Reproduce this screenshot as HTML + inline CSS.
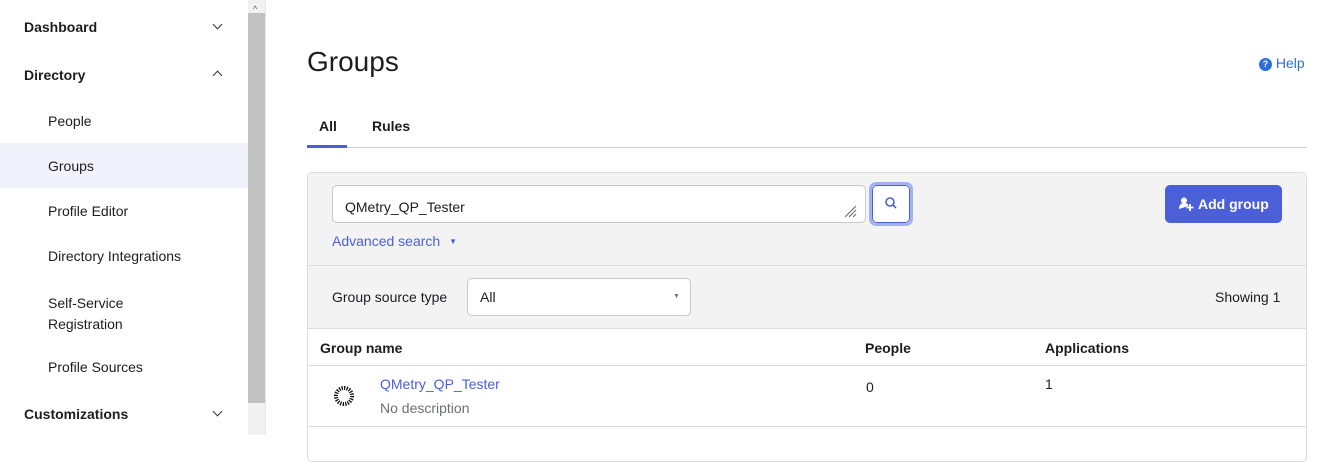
<!DOCTYPE html>
<html><head><style>
*{margin:0;padding:0;box-sizing:border-box}
body{width:1330px;height:435px;overflow:hidden;background:#fff;font-family:"Liberation Sans",sans-serif;color:#1d1d21;position:relative}
.a{position:absolute;white-space:nowrap}
.nav{font-size:14px;font-weight:bold;color:#1d1d21}
.sub{font-size:14px;color:#1d1d21}
.chev{position:absolute;width:7px;height:7px;border-right:1.5px solid #333;border-bottom:1.5px solid #333}
.blue{color:#4b5fd9}
</style></head><body>
<div class="a" style="left:0;top:143px;width:248px;height:45px;background:#f0f2fc"></div>
<div class="a nav" style="left:24px;top:19px">Dashboard</div>
<div class="chev" style="left:214px;top:21px;transform:rotate(45deg)"></div>
<div class="a nav" style="left:24px;top:67px">Directory</div>
<div class="chev" style="left:214px;top:72px;transform:rotate(-135deg)"></div>
<div class="a sub" style="left:48px;top:113px">People</div>
<div class="a sub" style="left:48px;top:158px">Groups</div>
<div class="a sub" style="left:48px;top:203px">Profile Editor</div>
<div class="a sub" style="left:48px;top:248px">Directory Integrations</div>
<div class="a sub" style="left:48px;top:293px;line-height:21px">Self-Service<br>Registration</div>
<div class="a sub" style="left:48px;top:359px">Profile Sources</div>
<div class="a nav" style="left:24px;top:406px">Customizations</div>
<div class="chev" style="left:214px;top:408px;transform:rotate(45deg)"></div>
<div class="a" style="left:248px;top:0;width:17px;height:435px;background:#f1f1f1"></div>
<div class="a" style="left:248px;top:13px;width:17px;height:390px;background:#c1c1c1"></div>
<div class="a" style="left:253px;top:4px;font-size:9px;color:#555">&#94;</div>
<div class="a" style="left:265px;top:0;width:1px;height:435px;background:#e6e6e6"></div>

<div class="a" style="left:307px;top:46px;font-size:28px;color:#1d1d21">Groups</div>
<div class="a blue" style="left:1259px;top:55px;font-size:14px"><span style="display:inline-block;width:13px;height:13px;border-radius:50%;background:#2d6fd6;color:#fff;font-size:9px;font-weight:bold;text-align:center;line-height:13px;vertical-align:1px">?</span> <span style="color:#2d6fd6">Help</span></div>
<div class="a" style="left:319px;top:118px;font-size:14px;font-weight:bold">All</div>
<div class="a" style="left:372px;top:118px;font-size:14px;font-weight:bold">Rules</div>
<div class="a" style="left:307px;top:147px;width:1000px;height:1px;background:#cfcfcf"></div>
<div class="a" style="left:307px;top:145px;width:40px;height:3px;background:#4b5fd9"></div>

<div class="a" style="left:307px;top:172px;width:1000px;height:290px;border:1px solid #dcdcdc;border-radius:5px;background:#fff"></div>
<div class="a" style="left:308px;top:173px;width:998px;height:155px;background:#f3f3f3;border-top-left-radius:5px;border-top-right-radius:5px"></div>
<div class="a" style="left:308px;top:265px;width:998px;height:1px;background:#dcdcdc"></div>
<div class="a" style="left:308px;top:328px;width:998px;height:1px;background:#dcdcdc"></div>
<div class="a" style="left:308px;top:365px;width:998px;height:1px;background:#dcdcdc"></div>
<div class="a" style="left:308px;top:426px;width:998px;height:1px;background:#dcdcdc"></div>

<div class="a" style="left:332px;top:185px;width:534px;height:38px;background:#fff;border:1px solid #c8c8c8;border-radius:5px"></div>
<div class="a" style="left:345px;top:199px;font-size:14px">QMetry_QP_Tester</div>
<svg class="a" style="left:842px;top:203px" width="16" height="16"><path d="M14 3L3 14M14 7L7 14M14 11L11 14" stroke="#666" stroke-width="1"/></svg>
<div class="a" style="left:869px;top:182px;width:44px;height:44px;border:3px solid #a5b0f0;border-radius:7px"></div>
<div class="a" style="left:872px;top:185px;width:38px;height:38px;border:1px solid #4b5fd9;border-radius:5px;background:#fff"></div>
<svg class="a" style="left:884px;top:196px" width="14" height="14"><circle cx="6" cy="6" r="4" fill="none" stroke="#4b5fd9" stroke-width="1.6"/><path d="M9 9L12 12" stroke="#4b5fd9" stroke-width="1.6"/></svg>
<div class="a blue" style="left:332px;top:233px;font-size:14px">Advanced search <span style="font-size:8px;margin-left:5px;vertical-align:2px">&#9660;</span></div>
<div class="a" style="left:1165px;top:185px;width:117px;height:38px;background:#4b5fd9;border-radius:5px;color:#fff;font-size:14px;font-weight:bold;padding:11px 0 0 33px">Add group</div>
<svg class="a" style="left:1178px;top:196px" width="16" height="16"><circle cx="6" cy="4.5" r="3" fill="#fff"/><path d="M1 13c0-4 2-6 5-6s4 1 4.5 3" fill="#fff"/><path d="M12 8v7M8.5 11.5h7" stroke="#fff" stroke-width="1.8"/></svg>

<div class="a" style="left:332px;top:289px;font-size:14px">Group source type</div>
<div class="a" style="left:467px;top:278px;width:224px;height:38px;background:#fff;border:1px solid #c8c8c8;border-radius:5px"></div>
<div class="a" style="left:480px;top:289px;font-size:14px">All</div>
<div class="a" style="left:673px;top:293px;font-size:7px;color:#777">&#9660;</div>
<div class="a" style="left:1215px;top:289px;font-size:14px">Showing 1</div>

<div class="a" style="left:320px;top:340px;font-size:14px;font-weight:bold">Group name</div>
<div class="a" style="left:865px;top:340px;font-size:14px;font-weight:bold">People</div>
<div class="a" style="left:1045px;top:340px;font-size:14px;font-weight:bold">Applications</div>
<svg class="a" style="left:332px;top:384px" width="24" height="24"><circle cx="12" cy="12" r="8" fill="none" stroke="#111" stroke-width="4" stroke-dasharray="1.3 1.2"/><circle cx="12" cy="12" r="5.5" fill="#fff"/></svg>
<div class="a blue" style="left:380px;top:376px;font-size:14px">QMetry_QP_Tester</div>
<div class="a" style="left:380px;top:400px;font-size:14px;color:#6e6e78">No description</div>
<div class="a" style="left:866px;top:379px;font-size:14px">0</div>
<div class="a" style="left:1045px;top:376px;font-size:14px">1</div>
</body></html>
